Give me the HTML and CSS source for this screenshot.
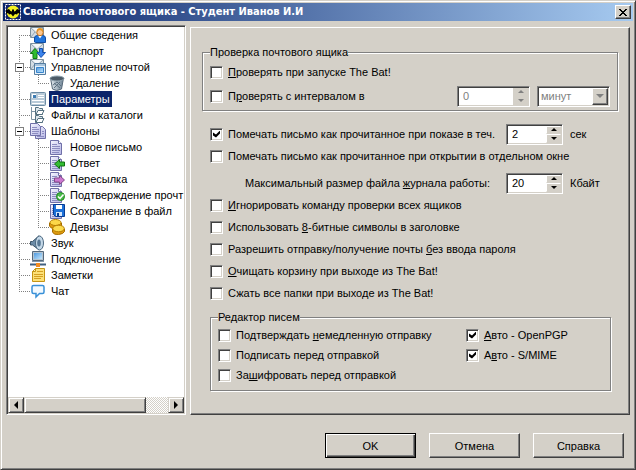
FILE: index.html
```html
<!DOCTYPE html>
<html lang="ru">
<head>
    <meta charset="UTF-8">
    <meta name="viewport" content="width=device-width, initial-scale=1.0">
    <title>Свойства почтового ящика</title>
    <link rel="stylesheet" href="styles.css">
</head>
<body>
    <!-- Shared shapes for the tree icons -->
    <svg class="defs" width="0" height="0" aria-hidden="true">
        <defs>
            <linearGradient id="paper" x1="0" y1="0" x2="1" y2="1">
                <stop offset="0" stop-color="#f6f6ff"/>
                <stop offset="1" stop-color="#b4b4e4"/>
            </linearGradient>
            <linearGradient id="steel" x1="0" y1="0" x2="1" y2="0">
                <stop offset="0" stop-color="#e4ebf0"/>
                <stop offset="1" stop-color="#6c8294"/>
            </linearGradient>
            <linearGradient id="screen" x1="0" y1="0" x2="1" y2="1">
                <stop offset="0" stop-color="#4f9ae0"/>
                <stop offset="1" stop-color="#c4e6fc"/>
            </linearGradient>
            <symbol id="envelope" viewBox="0 0 16 16">
                <path d="M.5.500h13v10H.5z" fill="#d4dde4" stroke="#7c909e"/>
                <path d="M1 1l6 5.500L13 1M1 10l4-5M13 10L9 5" fill="none" stroke="#94a6b4"/>
                <path d="M2 1h10L7 5.500z" fill="#f4f7fa"/>
            </symbol>
            <symbol id="page" viewBox="0 0 16 16">
                <path d="M1.500 1.500h8l3 3v11h-11z" fill="url(#paper)" stroke="#7070a8"/>
                <path d="M9.500 1.500v3h3" fill="#fff" stroke="#7070a8"/>
                <path d="M3 5.500h5M3 7.500h8M3 9.500h8M3 11.500h8M3 13.500h7" stroke="#8c8cc0"/>
            </symbol>
        </defs>
    </svg>

    <div class="window">
        <header class="title-bar">
            <svg class="app-icon" viewBox="0 0 16 16" aria-hidden="true">
                <path d="M0 0h16v16H0z" fill="#10206a"/>
                <path d="M.5.500h15v15H.5z" fill="none" stroke="#fff" stroke-dasharray="2 1"/>
                <circle cx="8" cy="8" r="6.500" fill="#f4f020"/>
                <path d="M1 6l3-1 1.500 2 1.500.500V5l1 1 1-1v2.500L10.500 7 12 5l3 1v4l-2-1-1 1.500-2-.500-2 2.500L6 10l-2 .500L3 9l-2 1z" fill="#000"/>
            </svg>
            <h1>Свойства почтового ящика - Студент Иванов И.И</h1>
            <button type="button" class="close" aria-label="Закрыть">
                <svg width="8" height="7" viewBox="0 0 8 7" shape-rendering="crispEdges"><path d="M0 0h2v1h1v1h2V1h1V0h2v1H7v1H6v1H5v1h1v1h1v1h1v1H6V6H5V5H3v1H2v1H0V6h1V5h1V4h1V3H2V2H1V1H0z"/></svg>
            </button>
        </header>

        <main class="content">
            <!-- Navigation tree -->
            <nav class="tree">
                <ul class="tree-list">
                    <li>
                        <div class="node first"><span class="branch"></span>
                            <svg class="icon" viewBox="0 0 16 16"><use href="#envelope" width="16" height="16"/><path d="M4.500 15V11q0-2.500 3-2.500h5q3 0 3 2.500v4.500h-10z" fill="#1f74dc" stroke="#0f4ca4"/><path d="M8 8.500l2 3 2-3z" fill="#fff"/><circle cx="10" cy="5.500" r="3.200" fill="#fcc890" stroke="#c47420"/><path d="M6.500 5q0-4 3.500-4t3.500 4q-2-2-4-2t-3 2z" fill="#e89420"/></svg>
                            <a href="#general">Общие сведения</a>
                        </div>
                    </li>
                    <li>
                        <div class="node"><span class="branch"></span>
                            <svg class="icon" viewBox="0 0 16 16"><use href="#envelope" width="16" height="16"/><path d="M5 5.500l4.500 5H7v5H3v-5H.5z" fill="#30bc30" stroke="#107810"/><path d="M9.500 5.500h3v4h3L11 14.500l-4-5h2.500z" fill="#3c84ec" stroke="#1450b0"/></svg>
                            <a href="#transport">Транспорт</a>
                        </div>
                    </li>
                    <li>
                        <div class="node"><span class="branch"><button type="button" class="toggle" aria-label="Свернуть"></button></span>
                            <svg class="icon" viewBox="0 0 16 16"><use href="#envelope" width="16" height="16"/><path d="M4.500 4.500h11v11h-11z" fill="#e4f0fa" stroke="#547ca0"/><path d="M5 5h10v2H5z" fill="#a8c4dc"/><path d="M6.500 8.500h7v5h-7z" fill="url(#screen)" stroke="#3884cc"/></svg>
                            <a href="#mail">Управление почтой</a>
                        </div>
                        <ul>
                            <li>
                                <div class="node last"><span class="branch"></span>
                                    <svg class="icon" viewBox="0 0 16 16"><path d="M1.500 3l2 11q4 3 9 0l2-11z" fill="url(#steel)" stroke="#566878"/><ellipse cx="8" cy="3.500" rx="7" ry="2.500" fill="#4c5a66" stroke="#90a4b0"/><path d="M5 8l6 5M8 7l4 4M11 7l-6 6M8 7l-4 3" stroke="#5c7080"/></svg>
                                    <a href="#delete">Удаление</a>
                                </div>
                            </li>
                        </ul>
                    </li>
                    <li>
                        <div class="node"><span class="branch"></span>
                            <svg class="icon" viewBox="0 0 16 16"><rect x=".5" y="1.500" width="15" height="13" rx="1" fill="#b8cad8" stroke="#6c8ca4"/><path d="M2 3h4v4H2z" fill="#fff"/><path d="M3 4h3v3H3z" fill="#3c7cb4"/><path d="M8 4.500h6M8 6.500h6" stroke="#fff"/><path d="M2 9h12v1H2zM2 12h12v1H2z" fill="#fff"/></svg>
                            <a href="#options" class="selected" aria-current="page">Параметры</a>
                        </div>
                    </li>
                    <li>
                        <div class="node"><span class="branch"></span>
                            <svg class="icon" viewBox="0 0 16 16"><path d="M1.500 0v12.500H6M1.500 4.500H6" fill="none" stroke="#7c94a4"/><path d="M5.500.500h3l1 1h3v6h-7zM5.500 8.500h3l1 1h3v6h-7z" fill="#dce6ec" stroke="#547080"/><path d="M6 7.500l2-4h6l-2 4zM6 15.500l2-4h6l-2 4z" fill="#fff" stroke="#547080"/></svg>
                            <a href="#files">Файлы и каталоги</a>
                        </div>
                    </li>
                    <li>
                        <div class="node"><span class="branch"><button type="button" class="toggle" aria-label="Свернуть"></button></span>
                            <svg class="icon" viewBox="0 0 16 16"><path d="M5.500 3.500h7l3 3v9h-10z" fill="url(#paper)" stroke="#7070a8"/><path d="M.5.500h7l3 3v9H.5z" fill="url(#paper)" stroke="#7070a8"/><path d="M2 4.500h5M2 6.500h7M2 8.500h7M2 10.500h6M12 8.500h2M12 10.500h2M7 13.500h7" stroke="#8c8cc0"/></svg>
                            <a href="#templates">Шаблоны</a>
                        </div>
                        <ul>
                            <li>
                                <div class="node"><span class="branch"></span>
                                    <svg class="icon" viewBox="0 0 16 16"><use href="#page" width="16" height="16"/></svg>
                                    <a href="#new">Новое письмо</a>
                                </div>
                            </li>
                            <li>
                                <div class="node"><span class="branch"></span>
                                    <svg class="icon" viewBox="0 0 16 16"><use href="#page" width="16" height="16"/><path d="M5.500 9l5-4.500V7h5v4h-5v2.500z" fill="#34bc34" stroke="#107010"/></svg>
                                    <a href="#reply">Ответ</a>
                                </div>
                            </li>
                            <li>
                                <div class="node"><span class="branch"></span>
                                    <svg class="icon" viewBox="0 0 16 16"><use href="#page" width="16" height="16"/><path d="M15.500 9l-5-4.500V7h-5v4h5v2.500z" fill="#cc78d0" stroke="#844888"/></svg>
                                    <a href="#forward">Пересылка</a>
                                </div>
                            </li>
                            <li>
                                <div class="node"><span class="branch"></span>
                                    <svg class="icon" viewBox="0 0 16 16"><use href="#page" width="16" height="16"/><circle cx="11.500" cy="9.500" r="4" fill="#48bc48" stroke="#208420"/><path d="M9 9.500l2 2 3.500-4" fill="none" stroke="#fff" stroke-width="1.500"/></svg>
                                    <a href="#confirm">Подтверждение прочт</a>
                                </div>
                            </li>
                            <li>
                                <div class="node"><span class="branch"></span>
                                    <svg class="icon" viewBox="0 0 16 16"><use href="#page" width="16" height="16"/><path d="M4.500 1.500h11v12h-9l-2-2z" fill="#1c70d8" stroke="#083c94"/><path d="M7 2h6v4H7z" fill="#fff"/><path d="M7 9h6v4H7z" fill="#d4e4f8"/><path d="M8 10h2v3H8z" fill="#083c94"/></svg>
                                    <a href="#save">Сохранение в файл</a>
                                </div>
                            </li>
                            <li>
                                <div class="node last"><span class="branch"></span>
                                    <svg class="icon" viewBox="0 0 16 16"><path d="M.5 4v3q1 3 6 2.500t6-3V4z" fill="#e09c10" stroke="#a46c00"/><ellipse cx="6.500" cy="3.500" rx="5.500" ry="3" fill="#fcd848" stroke="#b47c00"/><path d="M3.500 10v3q1 3 6 2.500t6-3V10z" fill="#e09c10" stroke="#a46c00"/><ellipse cx="9.500" cy="9.500" rx="5.800" ry="3.300" fill="#fcdc50" stroke="#b47c00"/></svg>
                                    <a href="#cookies">Девизы</a>
                                </div>
                            </li>
                        </ul>
                    </li>
                    <li>
                        <div class="node"><span class="branch"></span>
                            <svg class="icon" viewBox="0 0 16 16"><path d="M.5 6.500h2L9 .800v14L2.500 10h-2z" fill="#6c8ca8" stroke="#3c5468"/><ellipse cx="9.500" cy="8" rx="4" ry="7" fill="#c4d8e8" stroke="#4c6880"/><ellipse cx="9" cy="8" rx="1.800" ry="3.500" fill="#587894"/></svg>
                            <a href="#sound">Звук</a>
                        </div>
                    </li>
                    <li>
                        <div class="node"><span class="branch"></span>
                            <svg class="icon" viewBox="0 0 16 16"><path d="M2.500.500h11v9h-11z" fill="#b4c4d0" stroke="#54687c"/><path d="M4 2h8v6H4z" fill="url(#screen)"/><path d="M2 10h12v1H2z" fill="#8498a8"/><path d="M0 13.500h16" stroke="#406080" stroke-width="2"/><path d="M6 12h4v4H6z" fill="#f48c20"/></svg>
                            <a href="#connection">Подключение</a>
                        </div>
                    </li>
                    <li>
                        <div class="node"><span class="branch"></span>
                            <svg class="icon" viewBox="0 0 16 16"><path d="M2.500 4.500l3-3h9v13h-12z" fill="#fce078" stroke="#c49414"/><path d="M2.500 4.500h3v-3z" fill="#fff4bc" stroke="#c49414"/><path d="M7 4.500h6M4 7.500h9M4 9.500h9M4 11.500h7" stroke="#d4a024"/></svg>
                            <a href="#notes">Заметки</a>
                        </div>
                    </li>
                    <li>
                        <div class="node last"><span class="branch"></span>
                            <svg class="icon" viewBox="0 0 16 16"><path d="M3.500 2.500h9q1.500 0 1.500 1.500v5q0 1.500-1.500 1.500H9.500L6 14v-3.500H3.500Q2 10.500 2 9V4q0-1.500 1.500-1.500z" fill="#f2f9ff" stroke="#3890d8" stroke-width="1.500"/></svg>
                            <a href="#chat">Чат</a>
                        </div>
                    </li>
                </ul>
                <div class="scrollbar">
                    <button type="button" class="scroll-button" aria-label="Влево"><span class="arrow-left"></span></button>
                    <div class="scroll-track"><div class="thumb"></div></div>
                    <button type="button" class="scroll-button" aria-label="Вправо"><span class="arrow-right"></span></button>
                </div>
            </nav>

            <!-- Options page -->
            <form class="panel" id="optionsForm">
                <fieldset class="check-group">
                    <legend>Проверка почтового ящика</legend>
                    <div class="row">
                        <input type="checkbox" id="checkStart">
                        <label for="checkStart"><u>П</u>роверять при запуске The Bat!</label>
                    </div>
                    <div class="row">
                        <input type="checkbox" id="checkInterval">
                        <label for="checkInterval">П<u>р</u>оверять с интервалом в</label>
                        <div class="spinner wide disabled push">
                            <input type="text" value="0" aria-label="Интервал" disabled>
                            <span class="steps">
                                <button type="button" aria-label="Больше" disabled><span class="arrow-up"></span></button>
                                <button type="button" aria-label="Меньше" disabled><span class="arrow-down"></span></button>
                            </span>
                        </div>
                        <div class="combo">
                            <select aria-label="Единица" disabled><option>минут</option></select>
                            <span class="combo-button"><span class="arrow-down"></span></span>
                        </div>
                    </div>
                </fieldset>

                <div class="options">
                    <div class="row">
                        <input type="checkbox" id="markRead" checked>
                        <label for="markRead">Помечать письмо как прочитанное при показе в теч.</label>
                        <div class="spinner push">
                            <input type="text" value="2" aria-label="Секунды">
                            <span class="steps">
                                <button type="button" aria-label="Больше"><span class="arrow-up"></span></button>
                                <button type="button" aria-label="Меньше"><span class="arrow-down"></span></button>
                            </span>
                        </div>
                        <span class="unit">сек</span>
                    </div>
                    <div class="row">
                        <input type="checkbox" id="markOpened">
                        <label for="markOpened">Помечать письмо как прочитанное при открытии в отдельном окне</label>
                    </div>
                    <div class="row log-size">
                        <label for="logSize" class="push">Максимальный размер файла <u>ж</u>урнала работы:</label>
                        <div class="spinner">
                            <input type="text" id="logSize" value="20">
                            <span class="steps">
                                <button type="button" aria-label="Больше"><span class="arrow-up"></span></button>
                                <button type="button" aria-label="Меньше"><span class="arrow-down"></span></button>
                            </span>
                        </div>
                        <span class="unit">Кбайт</span>
                    </div>
                    <div class="row">
                        <input type="checkbox" id="ignoreAll">
                        <label for="ignoreAll"><u>И</u>гнорировать команду проверки всех ящиков</label>
                    </div>
                    <div class="row">
                        <input type="checkbox" id="eightBit">
                        <label for="eightBit">Использовать <u>8</u>-битные символы в заголовке</label>
                    </div>
                    <div class="row">
                        <input type="checkbox" id="noPassword">
                        <label for="noPassword">Разрешить отправку/получение почты <u>б</u>ез ввода пароля</label>
                    </div>
                    <div class="row">
                        <input type="checkbox" id="emptyTrash">
                        <label for="emptyTrash"><u>О</u>чищать корзину при выходе из The Bat!</label>
                    </div>
                    <div class="row">
                        <input type="checkbox" id="compress">
                        <label for="compress">Сжать все папки при выходе из The Bat!</label>
                    </div>
                </div>

                <fieldset class="editor-group">
                    <legend>Редактор писем</legend>
                    <div class="row">
                        <input type="checkbox" id="confirmSend">
                        <label for="confirmSend">Подтверждать <u>н</u>емедленную отправку</label>
                    </div>
                    <div class="row">
                        <input type="checkbox" id="autoPgp" checked>
                        <label for="autoPgp"><u>А</u>вто - OpenPGP</label>
                    </div>
                    <div class="row">
                        <input type="checkbox" id="signSend">
                        <label for="signSend">По<u>д</u>писать перед отправкой</label>
                    </div>
                    <div class="row">
                        <input type="checkbox" id="autoSmime" checked>
                        <label for="autoSmime">А<u>в</u>то - S/MIME</label>
                    </div>
                    <div class="row">
                        <input type="checkbox" id="encryptSend">
                        <label for="encryptSend">За<u>ш</u>ифровать перед отправкой</label>
                    </div>
                </fieldset>
            </form>
        </main>

        <footer class="buttons">
            <button type="submit" form="optionsForm" class="default">OK</button>
            <button type="button">Отмена</button>
            <button type="button">Справка</button>
        </footer>
    </div>
</body>
</html>
```
FILE: styles.css
```css
* {
    box-sizing: border-box;
}

body {
    margin: 0;
    font-family: "Liberation Sans", Arial, sans-serif;
    font-size: 11px;
    line-height: 16px;
    color: #000;
    background-color: #d4d0c8;
}

.defs {
    position: absolute;
}

button, input, select {
    margin: 0;
    padding: 0;
    font: inherit;
    color: inherit;
    border-radius: 0;
}

button {
    display: flex;
    align-items: center;
    justify-content: center;
    background-color: #d4d0c8;
    border: 1px solid;
    border-color: #fff #404040 #404040 #fff;
    box-shadow: inset -1px -1px #808080;
}

.window {
    display: flex;
    flex-direction: column;
    min-height: 100vh;
    padding: 1px;
    border: 1px solid;
    border-color: #d4d0c8 #404040 #404040 #d4d0c8;
    box-shadow: inset 1px 1px #fff, inset -1px -1px #808080;
}

/* Title bar */
.title-bar {
    display: flex;
    align-items: center;
    gap: 2px;
    height: 18px;
    margin: 1px;
    padding: 0 2px;
    color: #fff;
    background: linear-gradient(to right, #0a246a, #a6caf0);
}

.app-icon {
    flex: none;
    width: 16px;
    height: 16px;
}

h1 {
    flex: 1;
    margin: 0;
    font-family: "DejaVu Sans Condensed", "DejaVu Sans", sans-serif;
    font-size: 11px;
    line-height: 18px;
    white-space: nowrap;
}

.close {
    width: 16px;
    height: 14px;
}

/* Main area */
.content {
    display: flex;
    flex: 1;
    gap: 4px;
    padding: 3px 4px 0;
}

/* Tree */
.tree {
    display: flex;
    flex: 0 0 180px;
    flex-direction: column;
    overflow: hidden;
    background-color: #fff;
    border: 1px solid;
    border-color: #808080 #fff #fff #808080;
    box-shadow: inset 1px 1px #404040, inset -1px -1px #d4d0c8;
    padding: 1px;
}

.tree ul {
    margin: 0;
    padding: 0;
    list-style: none;
}

.tree-list {
    flex: 1;
    overflow: hidden;
}

.tree li ul {
    padding-left: 19px;
    background: repeating-linear-gradient(#808080 0 1px, transparent 1px 2px) 11px 0 / 1px 100% no-repeat;
}

.node {
    display: flex;
    align-items: center;
    height: 16px;
    white-space: nowrap;
}

.branch {
    display: flex;
    flex: none;
    align-items: center;
    width: 22px;
    height: 16px;
    padding-left: 7px;
    background:
        repeating-linear-gradient(#808080 0 1px, transparent 1px 2px) 11px 0 / 1px 16px no-repeat,
        repeating-linear-gradient(to right, #808080 0 1px, transparent 1px 2px) 11px 8px / 11px 1px no-repeat;
}

.first .branch {
    background-position: 11px 8px, 11px 8px;
}

.last .branch {
    background-size: 1px 8px, 11px 1px;
}

.toggle {
    width: 9px;
    height: 9px;
    background: linear-gradient(#000, #000) center / 5px 1px no-repeat #fff;
    border: 1px solid #808080;
    box-shadow: none;
}

.icon {
    flex: none;
    width: 16px;
    height: 16px;
    margin-right: 3px;
}

.node a {
    padding: 0 2px;
    color: #000;
    text-decoration: none;
}

.node a.selected {
    color: #fff;
    background-color: #0a246a;
}

/* Scroll bar */
.scrollbar {
    display: flex;
    height: 16px;
}

.scroll-button {
    width: 16px;
}

.scroll-button,
.thumb {
    border-color: #d4d0c8 #404040 #404040 #d4d0c8;
    box-shadow: inset 1px 1px #fff, inset -1px -1px #808080;
}

.scroll-track {
    flex: 1;
    background: repeating-conic-gradient(#d4d0c8 0 25%, #fff 0 50%) 0 0 / 2px 2px;
}

.thumb {
    width: 85%;
    height: 16px;
    background-color: #d4d0c8;
    border-width: 1px;
    border-style: solid;
}

.arrow-left {
    border: 4px solid transparent;
    border-left-width: 0;
    border-right-color: #000;
}

.arrow-right {
    border: 4px solid transparent;
    border-right-width: 0;
    border-left-color: #000;
}

.arrow-up {
    border: 3px solid transparent;
    border-top-width: 0;
    border-bottom-color: #000;
}

.arrow-down {
    border: 3px solid transparent;
    border-bottom-width: 0;
    border-top-color: #000;
}

/* Options page */
.panel {
    flex: 1;
    min-width: 0;
    margin-top: 2px;
    padding: 16px 11px 22px;
    border: 1px solid;
    border-color: #fff #404040 #404040 #fff;
    box-shadow: inset -1px -1px #808080;
}

fieldset {
    min-width: 0;
    margin: 0;
    padding: 0 7px;
    border: 1px solid #808080;
    box-shadow: inset 1px 1px #fff, 1px 1px #fff;
}

legend {
    padding: 0;
    background-color: #d4d0c8;
}

.row {
    display: flex;
    align-items: center;
    gap: 5px;
    height: 22px;
    white-space: nowrap;
}

.push {
    margin-left: auto;
}

.check-group {
    padding-bottom: 2px;
}

.check-group .row {
    height: 24px;
}

.check-group .combo {
    margin-left: 2px;
}

.options {
    padding: 12px 8px 5px;
}

.log-size {
    margin-top: 5px;
}

.log-size .spinner {
    margin-left: 11px;
}

.unit {
    flex: none;
    width: 42px;
    padding-left: 2px;
}

.editor-group {
    display: grid;
    grid-template-columns: 248px 1fr;
    margin: 0 7px 0 8px;
    padding-bottom: 5px;
}

.editor-group .row {
    height: 20px;
}

input[type="checkbox"] {
    display: grid;
    flex: none;
    place-content: center;
    width: 13px;
    height: 13px;
    appearance: none;
    background-color: #fff;
    border: 1px solid;
    border-color: #808080 #fff #fff #808080;
    box-shadow: inset 1px 1px #404040, inset -1px -1px #d4d0c8;
}

input[type="checkbox"]:checked::before {
    content: "";
    width: 7px;
    height: 7px;
    background-color: #000;
    clip-path: polygon(0 2px, 3px 4px, 7px 0, 7px 3px, 3px 7px, 0 5px);
}

/* Spin box and drop-down */
.spinner,
.combo {
    display: flex;
    flex: none;
    height: 21px;
    padding: 1px;
    background-color: #fff;
    border: 1px solid;
    border-color: #808080 #fff #fff #808080;
    box-shadow: inset 1px 1px #404040, inset -1px -1px #d4d0c8;
}

.spinner {
    width: 57px;
}

.spinner.wide,
.combo {
    width: 73px;
}

.spinner input {
    flex: 1;
    min-width: 0;
    padding-left: 4px;
    background: none;
    border: 0;
    outline: 0;
}

.steps {
    display: grid;
    grid-template-rows: 1fr 1fr;
    width: 15px;
}

.steps button {
    border-color: #fff #d4d0c8 #d4d0c8 #fff;
    box-shadow: none;
}

.steps button:disabled {
    border-color: #d4d0c8;
}

.disabled,
.combo select:disabled {
    color: #808080;
    opacity: 1;
}

.disabled .arrow-up {
    border-bottom-color: #808080;
}

.disabled .arrow-down {
    border-top-color: #808080;
}

.combo select {
    flex: 1;
    min-width: 0;
    padding-left: 2px;
    appearance: none;
    background: none;
    border: 0;
}

.combo-button {
    display: flex;
    align-items: center;
    justify-content: center;
    width: 16px;
    background-color: #d4d0c8;
    border: 1px solid;
    border-color: #fff #404040 #404040 #fff;
    box-shadow: inset -1px -1px #808080;
}

.combo-button .arrow-down {
    border-width: 4px 4px 0;
    border-top-color: #808080;
}

/* Dialog buttons */
.buttons {
    display: flex;
    justify-content: flex-end;
    gap: 13px;
    padding: 18px 10px 10px;
}

.buttons button {
    width: 91px;
    height: 25px;
}

.buttons .default {
    border-color: #000;
    box-shadow: inset 1px 1px #fff, inset -1px -1px #404040, inset -2px -2px #808080;
}
```
